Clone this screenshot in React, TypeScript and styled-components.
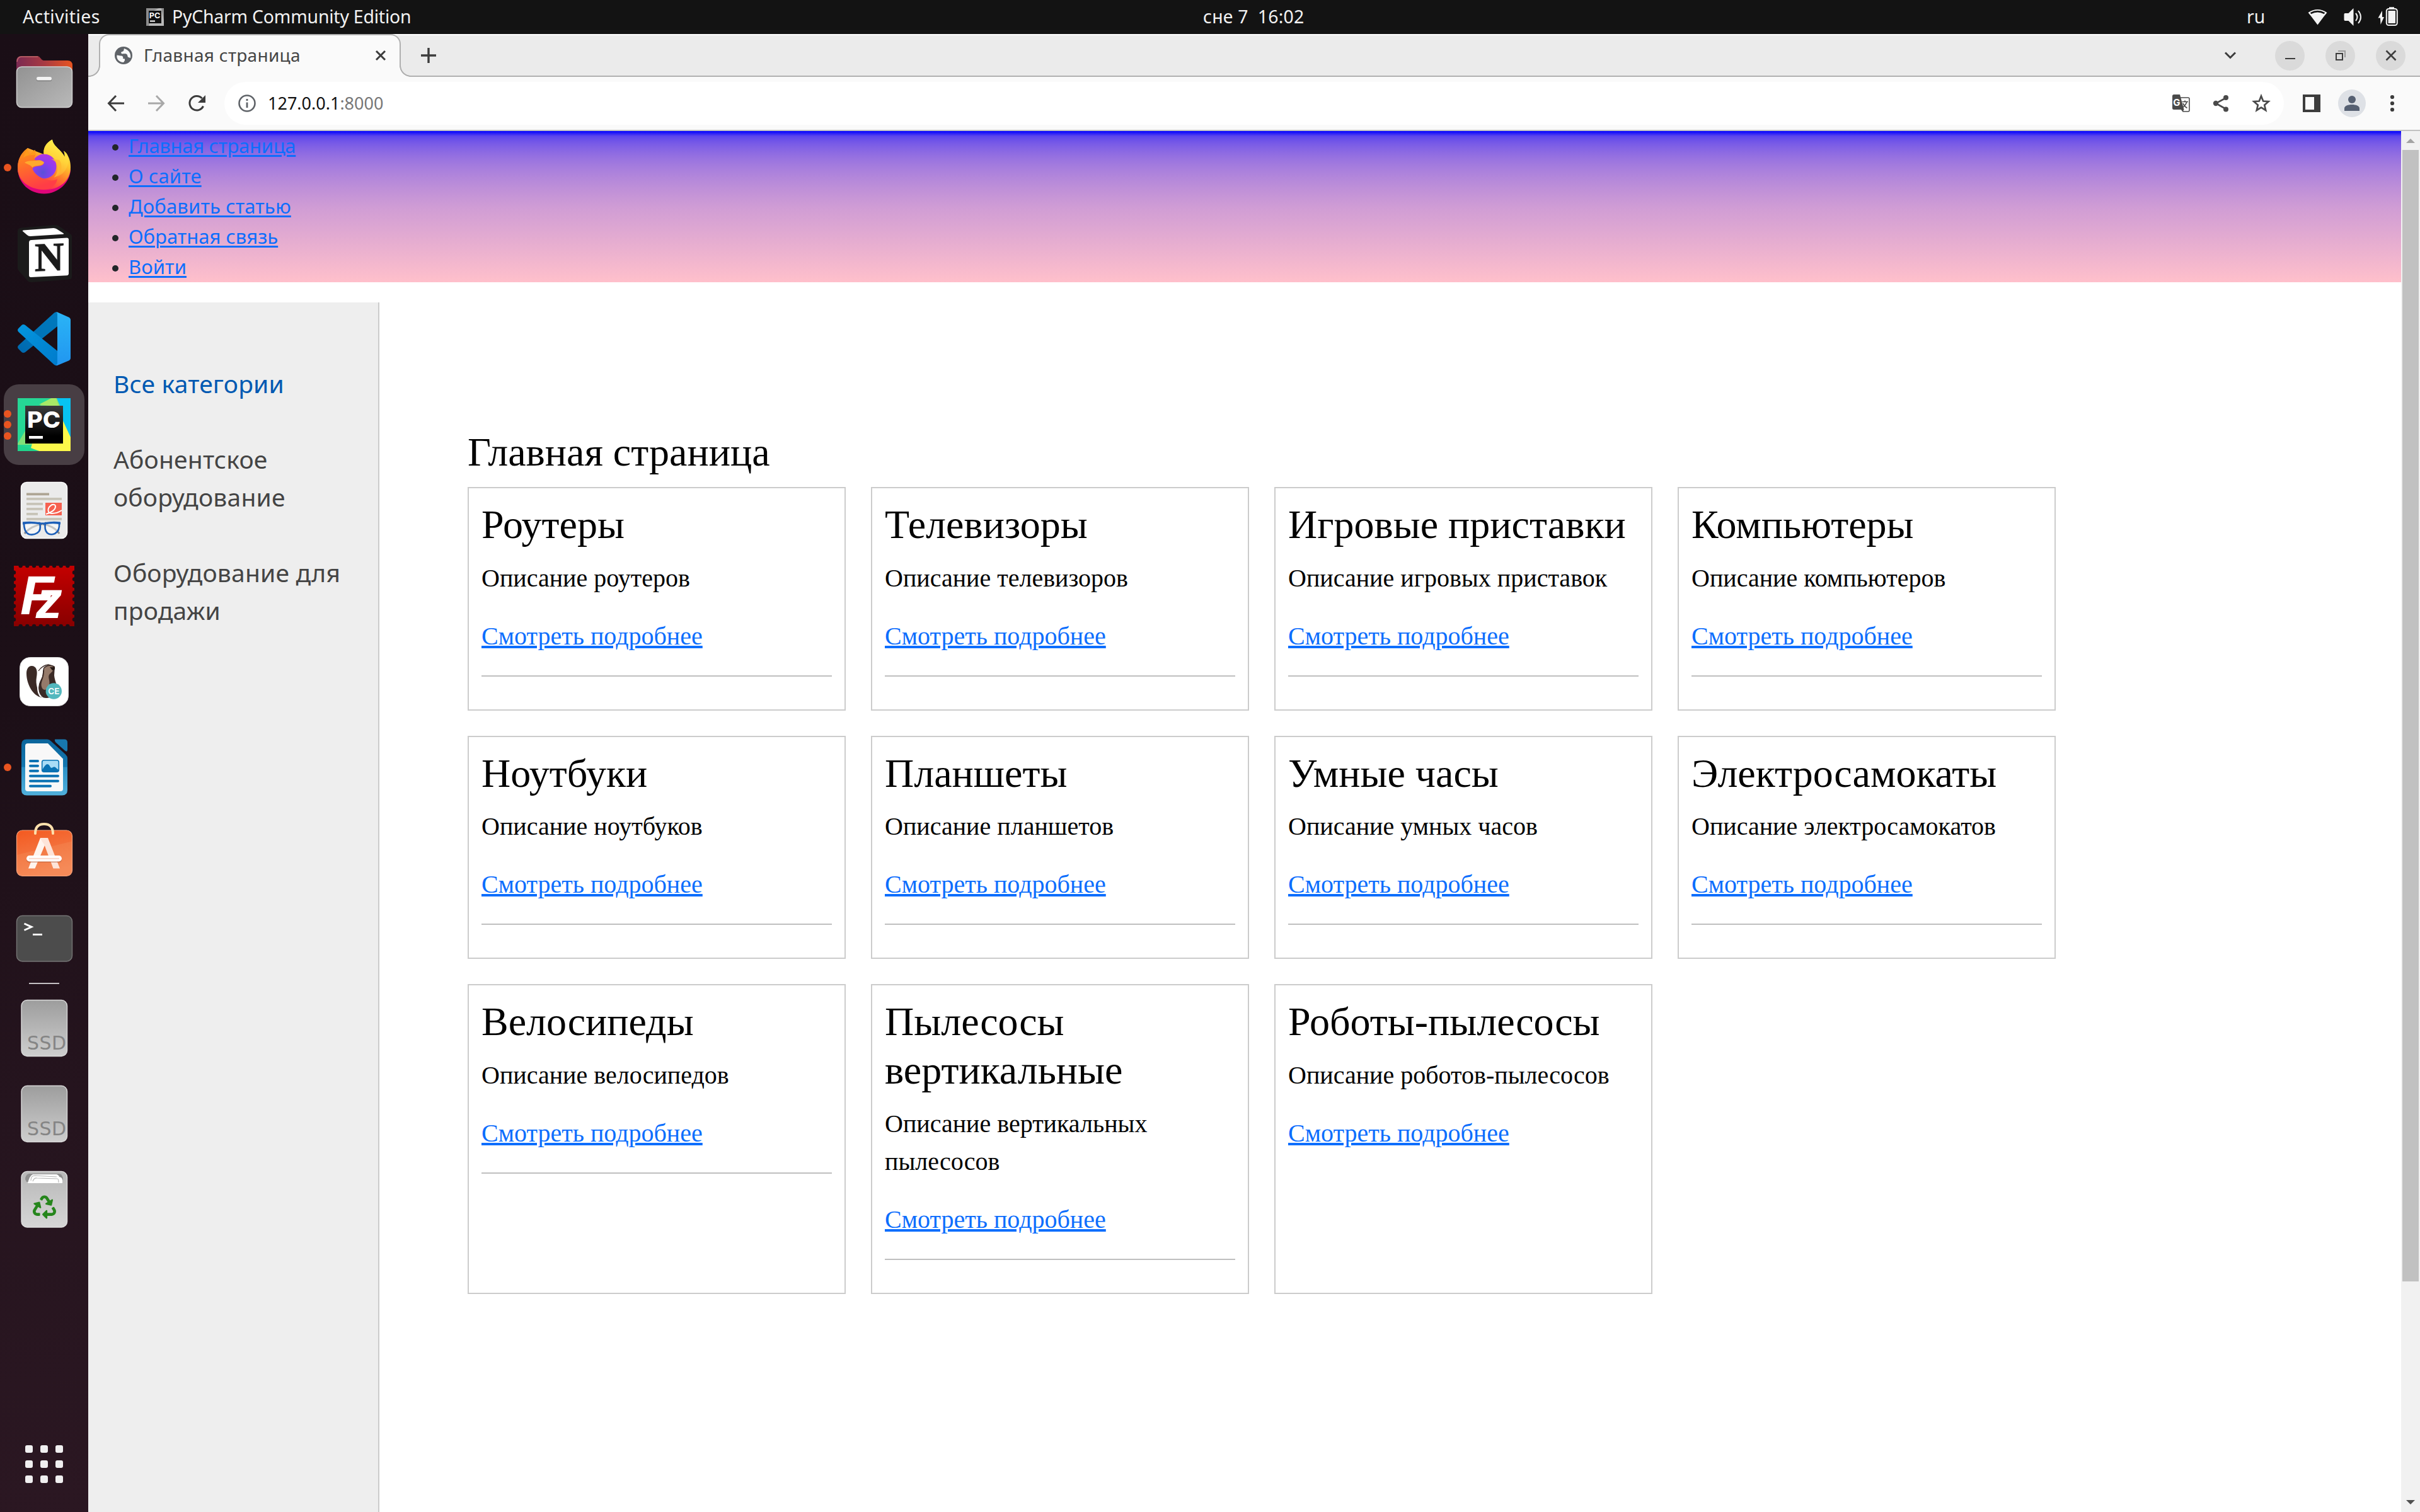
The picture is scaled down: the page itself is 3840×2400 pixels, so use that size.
import React from "react";
import styled, { createGlobalStyle, css } from "styled-components";
import { FaRecycle } from "react-icons/fa";

const sans = `"Noto Sans", "Open Sans", sans-serif`;
const serif = `"Liberation Serif", "Times New Roman", serif`;

const GlobalStyle = createGlobalStyle`
  *, *::before, *::after { box-sizing: border-box; }
  html, body { margin: 0; padding: 0; background: #fff; }
  body { overflow: hidden; }
  h1, h2, p, ul { margin: 0; padding: 0; font-weight: 400; }
  svg { display: block; flex: none; overflow: visible; }
`;

/* ---------- desktop shell ---------- */

const Desktop = styled.div`
  display: grid;
  grid-template: 54px 2346px / 140px 3700px;
  width: 3840px;
  height: 2400px;
  font-family: ${sans};
`;

const TopBar = styled.header`
  grid-column: 1 / -1;
  display: grid;
  grid-template-columns: 1909px auto 1fr;
  background: #131313;
  color: #f2f2f2;
  font-size: 28.4px;
  line-height: 53px;
  white-space: pre;
`;

const TopLeft = styled.div`
  display: flex;
  padding-left: 36px;
`;

const TopLabel = styled.span<{ $tracking?: number; $width?: number }>`
  letter-spacing: ${(p) => p.$tracking ?? 0}px;
  ${(p) => p.$width && css`width: ${p.$width}px;`}
`;

const AppMenu = styled.div`
  display: flex;
  gap: 13px;
  svg { margin-top: 13px; }
`;

const TopRight = styled.div`
  display: flex;
  justify-content: flex-end;
  padding-right: 33px;
  svg { margin-top: 11px; }
`;

/* ---------- dock ---------- */

const DockBar = styled.nav`
  display: flex;
  flex-direction: column;
  padding: 8px 0 0 6px;
  background: linear-gradient(172deg, #1a0e16 0%, #1c0f17 45%, #25141e 72%, #2b1722 100%);
`;

const DockSlot = styled.div<{ $active?: boolean }>`
  position: relative;
  display: flex;
  align-items: center;
  justify-content: center;
  width: 128px;
  height: 128px;
  margin: 4px 0;
  border-radius: 24px;
  background: ${(p) => (p.$active ? "#483e44" : "transparent")};
`;

const RunningDots = styled.div`
  position: absolute;
  left: 0;
  top: 0;
  bottom: 0;
  display: flex;
  flex-direction: column;
  justify-content: center;
  gap: 5.5px;
`;

const Dot = styled.i`
  width: 12px;
  height: 12px;
  border-radius: 50%;
  background: #e95420;
`;

const DockRule = styled.div`
  width: 48px;
  height: 2px;
  margin: 2px 0 2px 40px;
  background: #c4c0c3;
`;

const AppsGrid = styled.div`
  display: grid;
  grid-template: repeat(3, 12px) / repeat(3, 12px);
  gap: 12px;
  margin: auto 0 46px 34px;
  i { border-radius: 3px; background: #f0eff0; }
`;

/* ---------- browser chrome ---------- */

const Browser = styled.main`
  display: grid;
  grid-template-rows: 68px 86px 2192px;
  background: #fff;
`;

const TabStrip = styled.div`
  display: flex;
  border-top: 2px solid #fff;
  border-bottom: 2px solid #b0b0b0;
  background: #ebebeb;
  padding-left: 17px;
`;

const Tab = styled.div`
  position: relative;
  display: flex;
  align-items: center;
  width: 479px;
  height: 68px;
  margin-top: -2px;
  padding: 0 20px 2px 23px;
  border: 2px solid #b0b0b0;
  border-bottom: 0;
  border-radius: 16px 16px 0 0;
  background: #fafafa;
  color: #454545;
  font-size: 28px;
  letter-spacing: 0.3px;

  &::before,
  &::after {
    content: "";
    position: absolute;
    bottom: 0;
    width: 18px;
    height: 18px;
  }
  &::before {
    left: -18px;
    background: radial-gradient(circle at 0 0, #ebebeb 15.5px, #b0b0b0 16.2px, #b0b0b0 17.6px, #fafafa 18.2px);
  }
  &::after {
    right: -18px;
    background: radial-gradient(circle at 100% 0, #ebebeb 15.5px, #b0b0b0 16.2px, #b0b0b0 17.6px, #fafafa 18.2px);
  }
`;

const TabTitle = styled.span`
  flex: 1;
  margin-left: 18px;
  padding-bottom: 2px;
`;

const NewTab = styled.div`
  display: flex;
  align-items: center;
  margin-left: 32px;
`;

const WindowControls = styled.div`
  display: flex;
  align-items: center;
  margin-left: auto;
  padding-right: 23px;
`;

const Spacer = styled.span`
  width: 28px;
`;

const RoundButton = styled.span`
  display: flex;
  align-items: center;
  justify-content: center;
  width: 47px;
  height: 47px;
  margin-left: 33px;
  border-radius: 50%;
  background: #dadada;
`;

const Toolbar = styled.div`
  display: flex;
  align-items: center;
  background: #fafafa;
  border-bottom: 2px solid #c2c2c2;
  padding-left: 28px;
`;

const NavButtons = styled.div`
  display: flex;
  gap: 32px;
  width: 188px;
`;

const Omnibox = styled.div`
  display: flex;
  align-items: center;
  width: 3268px;
  height: 68px;
  padding: 0 21px 0 22px;
  border-radius: 34px;
  background: #fff;
`;

const Address = styled.span`
  flex: 1;
  margin-left: 19px;
  padding-bottom: 2px;
  font-size: 27px;
  color: #111;
  span { color: #777; }
`;

const OmniIcons = styled.div`
  display: flex;
  align-items: center;
  gap: 36px;
`;

const ToolbarRight = styled.div`
  display: flex;
  align-items: center;
  padding-left: 30px;
`;

const Avatar = styled.span`
  display: flex;
  align-items: center;
  justify-content: center;
  width: 44px;
  height: 44px;
  margin: 0 38px 0 28px;
  border-radius: 50%;
  background: #dee1e6;
`;

/* ---------- page ---------- */

const Viewport = styled.div`
  display: grid;
  grid-template-columns: 3670px 30px;
`;

const Page = styled.div`
  display: grid;
  grid-template-rows: 240px 1920px;
  row-gap: 32px;
`;

const SiteHeader = styled.ul`
  list-style: none;
  padding-left: 38px;
  background: linear-gradient(blue, 10%, pink);
`;

const MenuItem = styled.li`
  display: flex;
  align-items: center;
  height: 48px;
  &::before {
    content: "";
    width: 10px;
    height: 10px;
    margin: 4px 16px 0 0;
    border-radius: 50%;
    background: #212529;
  }
`;

const MenuLink = styled.a<{ $tracking: number }>`
  font-size: 31px;
  line-height: 46px;
  padding-bottom: 2px;
  letter-spacing: ${(p) => p.$tracking}px;
  color: #0d6efd;
  text-decoration: underline;
  text-decoration-thickness: 3px;
  text-underline-offset: 3px;
`;

const Columns = styled.div`
  display: grid;
  grid-template-columns: 462px 1fr;
`;

const Sidebar = styled.aside`
  display: flex;
  flex-direction: column;
  gap: 60px;
  padding: 99px 40px 0;
  background: #eee;
  border-right: 2px solid #ccc;
`;

const Category = styled.a<{ $selected?: boolean }>`
  font-size: 39px;
  line-height: 60px;
  letter-spacing: 0.2px;
  color: ${(p) => (p.$selected ? "#0059b2" : "#444")};
`;

const Content = styled.section`
  padding: 200px 0 0 140px;
  font-family: ${serif};
  color: #000;
`;

const Heading = styled.h1`
  font-size: 64px;
  line-height: 76.8px;
  margin-bottom: 16px;
`;

const CardGrid = styled.div`
  display: grid;
  grid-template-columns: repeat(4, 600px);
  gap: 40px;
`;

const Card = styled.article`
  padding: 20px;
  border: 2px solid #ccc;
`;

const CardTitle = styled.h2`
  font-size: 64px;
  line-height: 76.8px;
  margin-bottom: 16px;
`;

const CardText = styled.p`
  font-size: 40px;
  line-height: 60px;
  margin-bottom: 32px;
`;

const CardLink = styled.a`
  display: block;
  width: max-content;
  font-size: 40px;
  line-height: 60px;
  color: #0d6efd;
  text-decoration: underline;
  text-decoration-thickness: 4px;
  text-underline-offset: 2px;
`;

const CardRule = styled.hr`
  height: 2px;
  margin: 32px 0;
  border: 0;
  background: #bfbfbf;
`;

const Scrollbar = styled.div`
  display: flex;
  flex-direction: column;
  align-items: center;
  background: #f1f1f1;
  padding: 12px 0;
`;

const Thumb = styled.div`
  width: 26px;
  height: 1796px;
  margin: 11px 0 auto;
  background: #c1c1c1;
`;

/* ---------- dock icons, each on a 96 unit square ---------- */

const Icon = ({ children }: { children: React.ReactNode }) => (
  <svg width="96" height="96" viewBox="0 0 96 96">{children}</svg>
);

const FilesIcon = () => (
  <Icon>
    <defs>
      <linearGradient id="fb" x1="0" x2="1"><stop offset="0" stopColor="#7b2a52" /><stop offset=".5" stopColor="#a83a42" /><stop offset="1" stopColor="#e95420" /></linearGradient>
      <linearGradient id="ff" x1="0" x2="1" y1="0" y2="1"><stop offset="0" stopColor="#929292" /><stop offset="1" stopColor="#b9b9b9" /></linearGradient>
    </defs>
    <path d="M4 40V15q0-8 8-8h26q2 0 4 3t5 4h38q8 0 8 8v18z" fill="url(#fb)" />
    <path d="M5 16q1-8 7-8h26" fill="none" stroke="#c06a6a" strokeWidth="1.5" />
    <rect x="4.5" y="24" width="88" height="64.5" rx="8" fill="url(#ff)" stroke="#cfcfcf" strokeWidth="1.5" />
    <rect x="36" y="42" width="24" height="5" rx="2.5" fill="#7a7a7a" />
    <rect x="36" y="40" width="24" height="5.6" rx="2.8" fill="#f3f3f3" />
  </Icon>
);

const FirefoxIcon = () => (
  <Icon>
    <defs>
      <linearGradient id="fx" x1=".8" y1=".1" x2=".25" y2=".95"><stop offset="0" stopColor="#fff44f" /><stop offset=".3" stopColor="#ffc02c" /><stop offset=".55" stopColor="#ff7a2a" /><stop offset=".8" stopColor="#ff3a4a" /><stop offset="1" stopColor="#e6007e" /></linearGradient>
      <radialGradient id="fp" cx=".45" cy=".75" r=".8"><stop offset="0" stopColor="#5a50d8" /><stop offset=".5" stopColor="#8a3df0" /><stop offset="1" stopColor="#b833e1" /></radialGradient>
      <linearGradient id="fl" x1=".7" y1="0" x2=".4" y2="1"><stop offset="0" stopColor="#fff44f" /><stop offset=".5" stopColor="#ffd53a" /><stop offset="1" stopColor="#ff9a2e" /></linearGradient>
      <linearGradient id="fs" x1="0" y1="0" x2=".3" y2="1"><stop offset="0" stopColor="#ff9d14" /><stop offset=".5" stopColor="#ff6a2c" /><stop offset="1" stopColor="#ff3d46" /></linearGradient>
    </defs>
    <path d="M6 50C7 73 25 89.5 48 89.5S90 71 90 50L80 60 20 62z" fill="#e0057a" />
    <path d="M22 17C11 25 6 36 6 48c0 21 18 35.500 42 35.500S90 69 90 48c0-11-3-20-11-26.400 1.600 4 2 7 1.600 9.400C76 20 62 14 61 3.400 50 9 46.500 18 47.500 27z" fill="url(#fx)" />
    <circle cx="48" cy="46" r="19.500" fill="url(#fp)" />
    <path d="M61 3.400C50 9 46.500 18 47.500 26.500 56 26 61 30 66 36c5 8 4 20-2 27 14-2 24-14 22-32-1-4-3-7-7-9.400 1.600 4 2 7 1.600 9.400C76 20 62 14 61 3.400z" fill="url(#fl)" />
    <path d="M57 34c10 2 15 12 12 20-1 5-3 8-6 10 12-4 16-19 9-28z" fill="#ffb62e" opacity=".8" />
    <path d="M22 17C11 25 6 36 6 48c0 20 17 34 40 35 12 0 21-6 23-17-4 3-11 3-18 1-11-3-19-10-21.500-17 1-3 5-4 10-4.500 5 0 8-2.500 8-5.500-4-4-8-4-12.500-3.500C32 35 31 33 34.500 27.500L33.700 20c-4 2-6.700 5-8 8-2.700-2-3.700-6-3.700-11z" fill="url(#fs)" />
    <path d="M17 40c6-4 14-2 22-3.500 4-.5 7 1 9 3.500-2 4-6 4.500-10 5-5 .5-7 1-8.500 3C26 43 21 43 17 40z" fill="#ffa92e" />
    <path d="M22 17c-2 4-5 9-7 15 7-5 15-4 19-4l-.3-8c-4 2-6.700 5-8 8-2.700-2-3.700-6-3.700-11z" fill="#ff9a1c" />
  </Icon>
);

const NotionIcon = () => (
  <Icon>
    <path d="M12 7.500 66 3q3 0 5 1.500l19 13q2 2 2 4V85q0 4-4 4.500L28 94q-4 0-6-2L8 76q-2-2-2-5V13q0-5 6-5.500z" fill="#1b1b1b" />
    <path d="M15 11.500 63 8q3 0 5 1.500l11 7q1 1-1 1.200L26 21q-3 0-5-2l-7-6q-1-1 1-1.500z" fill="#fff" />
    <path d="M28 27l56-3.500q3 0 3 3V80q0 3-3 3.200L27 86q-3 0-3-3V31q0-4 4-4z" fill="#fff" />
    <text x="56" y="76" fontFamily="Liberation Serif, serif" fontWeight="700" fontSize="64" textAnchor="middle" fill="#1b1b1b" stroke="#1b1b1b" strokeWidth="1" transform="skewY(-2) translate(0 1.500)">N</text>
  </Icon>
);

const CodeIcon = () => (
  <Icon>
    <defs>
      <linearGradient id="vr" x2="0" y2="1"><stop offset="0" stopColor="#2ab4f6" /><stop offset="1" stopColor="#2196f0" /></linearGradient>
      <linearGradient id="vd" x1="1" y1="0" x2="0" y2="1"><stop offset="0" stopColor="#0079bd" /><stop offset=".6" stopColor="#0073b8" /><stop offset="1" stopColor="#0067ad" /></linearGradient>
      <linearGradient id="vb" x2="1" y2="1"><stop offset="0" stopColor="#0496de" /><stop offset="1" stopColor="#007bcc" /></linearGradient>
    </defs>
    <path d="M69 5.500q-3-1-5.500 1.500L7.500 58q-3 3 0 6l5 5q2.500 2 5.500 0L69 28z" fill="url(#vd)" />
    <path d="M69 90q-3 1-5.500-1.500L7.500 37q-3-3 0-6l5-5q2.500-2 5.500 0L69 67z" fill="url(#vb)" />
    <path d="M69 5.500 87 13.500q3 1.500 3 4.500v60q0 3-3 4.500L69 90q-2 0-2-1 2 0 2-3V9q0-3-2-3z" fill="url(#vr)" />
  </Icon>
);

const PyCharmIcon = () => (
  <Icon>
    <defs><linearGradient id="pk" x2="0" y2="1"><stop offset="0" stopColor="#3c3c3c" /><stop offset=".8" stopColor="#000" /></linearGradient></defs>
    <rect x="6" y="6" width="84" height="84" fill="#26d695" />
    <path d="M58 6h32v64L74 42z" fill="#07c3f2" />
    <path d="M44 14 59 6h9l6 14v60H6V78z" fill="#7fe078" />
    <path d="M40 16 60 6h7l5 14z" fill="#a9e966" />
    <path d="M78 42 90 68v22H40L27 85l3-10z" fill="#fcf84a" />
    <path d="M6 80v10h34z" fill="#21d48c" />
    <rect x="18" y="18" width="60" height="60" fill="url(#pk)" />
    <text x="21" y="52.500" fontFamily="Inter, sans-serif" fontWeight="800" fontSize="36" textLength="53" lengthAdjust="spacingAndGlyphs" fill="#fff">PC</text>
    <rect x="24" y="66" width="22" height="4.400" fill="#fff" />
  </Icon>
);

const ViewerIcon = () => (
  <Icon>
    <rect x="11.500" y="3.500" width="73" height="89" rx="9" fill="#ebebeb" stroke="#fafafa" strokeWidth="1.500" />
    <rect x="20" y="20.500" width="36" height="3.800" fill="#aea594" />
    <g fill="#c8c4b8">
      <rect x="20" y="28" width="56" height="3.800" /><rect x="20" y="36" width="26" height="3.800" />
      <rect x="20" y="44" width="26" height="3.800" /><rect x="20" y="52" width="18" height="3.800" />
      <rect x="20" y="60" width="56" height="3.800" />
    </g>
    <rect x="50" y="36" width="26" height="20" fill="#f66151" />
    <path d="M51 54c8-2 15-7 15-12 0-4-5-4-8-1-5 4-5 12 2 12 6 0 10-1 16-5" fill="none" stroke="#fff" strokeWidth="2" />
    <path d="M17 85c6-8 18-14 28-15M72 85c-5-8-16-14-26-15" fill="none" stroke="#8b8b8b" strokeWidth="3" />
    <path d="M16 68h25q3 12-4 16-6 4-13 2-8-3-8-18zM50 68h22q1 13-7 17-7 3-12-1-5-5-3-16z" fill="#fff" fillOpacity=".5" stroke="#1d5fb8" strokeWidth="2.600" />
    <path d="M14 66.500q14-2 27 1h8q12-3 25-1v4q-12-3-24 0h-9q-13-3-27 0z" fill="#1d5fb8" />
  </Icon>
);

const notches = Array.from({ length: 8 }, (_, i) => 10.67 * (i + 1));

const FileZillaIcon = () => (
  <Icon>
    <defs>
      <linearGradient id="fz" x2="0" y2="1"><stop offset="0" stopColor="#c40000" /><stop offset="1" stopColor="#880000" /></linearGradient>
      <mask id="fm">
        <rect width="96" height="96" fill="#fff" />
        {notches.map((n) => (
          <g key={n} fill="#000">
            <circle cx={n} cy="0" r="3.200" /><circle cx={n} cy="96" r="3.200" />
            <circle cx="0" cy={n} r="3.200" /><circle cx="96" cy={n} r="3.200" />
          </g>
        ))}
      </mask>
    </defs>
    <rect width="96" height="96" fill="url(#fz)" mask="url(#fm)" />
    <text x="10" y="77" fontFamily="Liberation Sans, sans-serif" fontStyle="italic" fontWeight="700" fontSize="88" fill="#fff">
      F<tspan dx="-29" dy="6" fontSize="84">z</tspan>
    </text>
  </Icon>
);

const BeaverIcon = () => (
  <Icon>
    <rect x="9.500" y="9.500" width="77" height="77" rx="16" fill="#fff" stroke="#d8d8d8" strokeWidth="1" />
    <path d="M28 23c8 0 10 8 8 18-2 11 2 22 8 32-14-2-24-22-24-38 0-7 3-12 8-12z" fill="#3b2a26" />
    <path d="M47 26c6-6 14-5 18-2l-1 14c1 10 5 14 4 22-2 12-14 16-22 13-7-6-8-14-6-22 2-7 6-10 5-15z" fill="#3b2a26" />
    <path d="M48 27c5-5 11-5 15-2 0 7-4 8-7 12-3 5 4 12-2 21-4 5-9 3-10-2-2-9 5-13 4-29z" fill="#957a6a" />
    <path d="M39 31q6-9 16-10l6 2" fill="none" stroke="#3b2a26" strokeWidth="1.300" />
    <path d="M45 29c1 14-7 16-7 29 0 6 2 11 5 14" fill="none" stroke="#fff" strokeWidth="2" />
    <path d="M57 25h8q1 5-4 5z" fill="#241815" />
    <circle cx="63.300" cy="63" r="12.700" fill="#53b8be" />
    <text x="63.300" y="68" textAnchor="middle" fontFamily="Inter, sans-serif" fontWeight="600" fontSize="13.500" fill="#fff">CE</text>
  </Icon>
);

const WriterIcon = () => (
  <Icon>
    <defs><linearGradient id="wr" x2="0" y2="1"><stop offset="0" stopColor="#0b659b" /><stop offset=".49" stopColor="#1377b0" /><stop offset=".5" stopColor="#2a8fc4" /><stop offset="1" stopColor="#50b0dc" /></linearGradient></defs>
    <path d="M20 3.500h33q3 0 6 3l23 21q3 3 3 6V84q0 8.500-8.500 8.500h-56q-8.500 0-8.500-8.500V12q0-8.500 8-8.500z" fill="url(#wr)" />
    <path d="M65.500 3.500H80q5 0 5 5v11q0 5-4 2L66 8q-2-4-.5-4.500z" fill="#1878ae" />
    <path d="M22 10h32l24 24.500V82q0 4-4 4H22q-4 0-4-4V14q0-4 4-4z" fill="#f8f8f8" />
    <path d="M26 38h12M26 45.700h12M26 53.700h12M26 61.700h44M26 69.800h44M26 77.800h32" stroke="#0a72b3" strokeWidth="4" strokeLinecap="round" />
    <rect x="44.700" y="36.700" width="26.600" height="18.600" rx="3" fill="#a9dcf6" stroke="#0a72b3" strokeWidth="1.600" />
    <path d="M45 52q5-9 8-9t5 5l2 1q4-3 6-1t5 4v3H45z" fill="#0a72b3" />
  </Icon>
);

const SoftwareIcon = () => (
  <Icon>
    <defs><linearGradient id="sw" x2=".3" y2="1"><stop offset="0" stopColor="#f4591f" /><stop offset=".49" stopColor="#f36f3a" /><stop offset=".5" stopColor="#f37a45" /><stop offset="1" stopColor="#f58a58" /></linearGradient></defs>
    <rect x="4.500" y="12" width="88" height="72.500" rx="9" fill="url(#sw)" stroke="#f8a47c" strokeWidth="1.200" />
    <path d="M34 17q0-15 14-15t14 15" fill="none" stroke="#fde0ac" strokeWidth="4" strokeLinecap="round" />
    <path d="M42 24h12l-20.500 48.500H23z" fill="#fff4ee" />
    <path d="M42 24h12l19 48.500H62.500L48 34l-3-4z" fill="#fde4d9" />
    <rect x="20" y="54.500" width="56" height="8.500" rx="4.200" fill="#b45a36" opacity=".6" />
    <rect x="20" y="52" width="56" height="9.500" rx="4.700" fill="#fff" />
    <rect x="24" y="55.800" width="48" height="2" fill="#fbd9cc" />
  </Icon>
);

const TerminalIcon = () => (
  <Icon>
    <rect x="4.500" y="11.500" width="88" height="72.500" rx="9" fill="#4c4c4c" stroke="#757575" strokeWidth="1.400" />
    <path d="M16.500 24 28 29.300 16.500 34.500" fill="none" stroke="#fff" strokeWidth="3" />
    <rect x="30" y="40" width="15" height="2.800" fill="#fff" />
  </Icon>
);

const DriveIcon = () => (
  <Icon>
    <defs><linearGradient id="sd" x2="0" y2="1"><stop offset="0" stopColor="#9d9d9d" /><stop offset="1" stopColor="#cecece" /></linearGradient></defs>
    <rect x="12" y="3.500" width="72.500" height="89" rx="9" fill="url(#sd)" stroke="#d9d9d9" strokeWidth="1.400" />
    <text x="21" y="81.500" fontFamily="DejaVu Sans, sans-serif" fontSize="30" textLength="62" fill="#858585">SSD</text>
  </Icon>
);

const TrashIcon = () => (
  <Icon>
    <defs><linearGradient id="tr" x2="0" y2="1"><stop offset="0" stopColor="#b8b8b8" /><stop offset="1" stopColor="#d6d6d6" /></linearGradient></defs>
    <rect x="12" y="3.500" width="72.500" height="88.500" rx="9" fill="url(#tr)" stroke="#dedede" strokeWidth="1.400" />
    <path d="M18 16q0-7 6-9h48q6 2 6 9l-2 4H20z" fill="#8f8f8f" />
    <path d="M22 22q3-12 8-14h38q4 2 4 4 5 1 5 5v5z" fill="#fff" />
    <path d="M27 18q0-8 6-8l35 2M30 19q2-6 7-5l32 1q2 0 2 6" fill="none" stroke="#b5b5b5" strokeWidth="1.200" />
    <FaRecycle x="30" y="41.500" size={37} color="#26861c" />
  </Icon>
);

/* ---------- data ---------- */

const dock: { icon: React.FC; running?: number; active?: boolean }[] = [
  { icon: FilesIcon },
  { icon: FirefoxIcon, running: 1 },
  { icon: NotionIcon },
  { icon: CodeIcon },
  { icon: PyCharmIcon, running: 3, active: true },
  { icon: ViewerIcon },
  { icon: FileZillaIcon },
  { icon: BeaverIcon },
  { icon: WriterIcon, running: 1 },
  { icon: SoftwareIcon },
  { icon: TerminalIcon },
];

const places: React.FC[] = [DriveIcon, DriveIcon, TrashIcon];

const menu = [
  { label: "Главная страница", tracking: -0.31 },
  { label: "О сайте", tracking: 0.15 },
  { label: "Добавить статью", tracking: 0.15 },
  { label: "Обратная связь", tracking: 0 },
  { label: "Войти", tracking: 0.1 },
];

const categories = ["Все категории", "Абонентское оборудование", "Оборудование для продажи"];

const cards = [
  { title: "Роутеры", text: "Описание роутеров" },
  { title: "Телевизоры", text: "Описание телевизоров" },
  { title: "Игровые приставки", text: "Описание игровых приставок" },
  { title: "Компьютеры", text: "Описание компьютеров" },
  { title: "Ноутбуки", text: "Описание ноутбуков" },
  { title: "Планшеты", text: "Описание планшетов" },
  { title: "Умные часы", text: "Описание умных часов" },
  { title: "Электросамокаты", text: "Описание электросамокатов" },
  { title: "Велосипеды", text: "Описание велосипедов" },
  { title: "Пылесосы вертикальные", text: "Описание вертикальных пылесосов" },
  { title: "Роботы-пылесосы", text: "Описание роботов-пылесосов" },
];

/* ---------- sections ---------- */

const SystemBar = () => (
  <TopBar>
    <TopLeft>
      <TopLabel $tracking={0.45} $width={196}>Activities</TopLabel>
      <AppMenu>
        <svg width="28" height="28" viewBox="0 0 28 28">
          <path d="M0 0h28v28H0z" fill="#8e8e8e" />
          <path d="M12 4 20 0h4l4 20v8H4z" fill="#b9b9b9" />
          <path d="M4 4h20v20H4z" fill="#111" />
          <text x="4.800" y="15.500" fontFamily="Inter, sans-serif" fontWeight="700" fontSize="12" textLength="17.500" lengthAdjust="spacingAndGlyphs" fill="#fff">PC</text>
          <path d="M6 19.500h8v2H6z" fill="#fff" />
        </svg>
        <TopLabel $tracking={-0.2}>PyCharm Community Edition</TopLabel>
      </AppMenu>
    </TopLeft>
    <TopLabel $tracking={0.2}>{"сне 7  16:02"}</TopLabel>
    <TopRight>
      <TopLabel $width={92}>ru</TopLabel>
      <svg width="150" height="32" viewBox="0 0 150 32" fill="#f2f2f2">
        <path d="M5.500 9Q20.500-1 35.500 9L31 14.500 20.500 28.500 10 14.500z" />
        <path d="M9.500 10.200Q20.500 4 31.500 10.200" fill="none" stroke="#131313" strokeWidth="2.600" />
        <path d="M64 10h5.500L77.500 2v28L69.500 22H64q-1.500 0-1.500-2v-8q0-2 1.500-2z" />
        <path d="M81 10q5 6 0 12M85 6q8 10 0 20" fill="none" stroke="#f2f2f2" strokeWidth="2" />
        <path d="M123 6 116.500 17.500h3.500L120.500 28 126 16h-3z" />
        <rect x="129.800" y="3" width="17" height="26" rx="3.500" fill="none" stroke="#f2f2f2" strokeWidth="2" />
        <path d="M134 .2h8V3h-8zM132.500 6h11.500v20h-11.500z" />
      </svg>
    </TopRight>
  </TopBar>
);

const Dock = () => (
  <DockBar>
    {dock.map(({ icon: Glyph, running = 0, active }, i) => (
      <DockSlot key={i} $active={active}>
        <Glyph />
        <RunningDots>{Array.from({ length: running }, (_, n) => <Dot key={n} />)}</RunningDots>
      </DockSlot>
    ))}
    <DockRule />
    {places.map((Glyph, i) => (
      <DockSlot key={i}><Glyph /></DockSlot>
    ))}
    <AppsGrid>{Array.from({ length: 9 }, (_, i) => <i key={i} />)}</AppsGrid>
  </DockBar>
);

const line = { fill: "none", stroke: "#3c3c3c", strokeWidth: 3 };

const Tabs = () => (
  <TabStrip>
    <Tab>
      <svg width="28" height="28" viewBox="0 0 28 28">
        <circle cx="14" cy="14" r="14" fill="#5f6368" />
        <path d="M3.500 13.500 9 14.500c4 0 5 2 4 4.500l3 .5v2.500l-2 3C7 24.500 2.500 20 3.500 13.500zM15 3c-1 3 0 4-3 5-3 .5-2 3 0 3.500 4 0 7-1 8 2 1 2 0 3 2 3.500l3 1c1-6-1-12-10-15z" fill="#fafafa" />
      </svg>
      <TabTitle>Главная страница</TabTitle>
      <svg width="20" height="20" viewBox="0 0 20 20"><path d="M3 3l14 14M17 3 3 17" {...line} /></svg>
    </Tab>
    <NewTab>
      <svg width="24" height="24" viewBox="0 0 24 24"><path d="M12 0v24M0 12h24" {...line} strokeWidth={3.4} /></svg>
    </NewTab>
    <WindowControls>
      <svg width="20" height="14" viewBox="0 0 20 14"><path d="M2 2.500 10 10.500 18 2.500" {...line} /></svg>
      <Spacer />
      <RoundButton><svg width="18" height="18" viewBox="0 0 18 18"><path d="M1 14h16" {...line} strokeWidth={2} /></svg></RoundButton>
      <RoundButton>
        <svg width="18" height="18" viewBox="0 0 18 18">
          <path d="M5 2h11v10" fill="none" stroke="#9a9a9a" strokeWidth="2" />
          <path d="M2 6h10v10H2z" {...line} strokeWidth={2} />
        </svg>
      </RoundButton>
      <RoundButton><svg width="18" height="18" viewBox="0 0 18 18"><path d="M1.500 1.500l15 15M16.500 1.500l-15 15" {...line} strokeWidth={2.6} /></svg></RoundButton>
    </WindowControls>
  </TabStrip>
);

const NavBar = () => (
  <Toolbar>
    <NavButtons>
      <svg width="32" height="32" viewBox="0 0 32 32"><path d="M29 16H5M16 4 4.500 16 16 28" {...line} /></svg>
      <svg width="32" height="32" viewBox="0 0 32 32"><path d="M3 16h24M16 4l11.500 12L16 28" {...line} stroke="#a8a8a8" /></svg>
      <svg width="32" height="32" viewBox="0 0 32 32">
        <path d="M26.500 20.500A11.300 11.300 0 1 1 24.500 8" {...line} />
        <path d="M30 3v12H18z" fill="#3c3c3c" />
      </svg>
    </NavButtons>
    <Omnibox>
      <svg width="28" height="28" viewBox="0 0 28 28">
        <circle cx="14" cy="14" r="12.500" fill="none" stroke="#5f6368" strokeWidth="2.600" />
        <path d="M12.600 12.500h2.800V21h-2.800zM12.600 7h2.800v3h-2.800z" fill="#5f6368" />
      </svg>
      <Address>127.0.0.1<span>:8000</span></Address>
      <OmniIcons>
        <svg width="28" height="28" viewBox="0 0 28 28">
          <path d="M13 5h12q2 0 2 2v18q0 2-2 2h-8l-3.500-5" fill="none" stroke="#4a4a4a" strokeWidth="1.600" />
          <path d="M15.500 11.500h9.500M20 9.500v2M23 11.500q-2 6-6.500 9M17 14q2 5 6.500 7.500" fill="none" stroke="#4a4a4a" strokeWidth="1.600" />
          <path d="M2.500 0H12l6.500 24-2 3-1.500-3H2.500Q0 24 0 21.500v-19Q0 0 2.500 0z" fill="#4a4a4a" />
          <text x="1.200" y="17.500" fontFamily="Inter, sans-serif" fontWeight="700" fontSize="15" fill="#fff">G</text>
        </svg>
        <svg width="26" height="28" viewBox="0 0 26 28">
          <path d="M21 5.500 5 14l16 9" fill="none" stroke="#4a4a4a" strokeWidth="2.600" />
          <g fill="#4a4a4a"><circle cx="21" cy="5" r="4" /><circle cx="5" cy="14" r="4.200" /><circle cx="21" cy="23.500" r="4" /></g>
        </svg>
        <svg width="30" height="30" viewBox="0 0 30 30">
          <path d="M15 3.500l3.200 8 8.400.7-6.400 5.500 2 8.300L15 21.500 7.800 26l2-8.300-6.400-5.500 8.400-.7z" fill="none" stroke="#4a4a4a" strokeWidth="2.700" />
        </svg>
      </OmniIcons>
    </Omnibox>
    <ToolbarRight>
      <svg width="28" height="28" viewBox="0 0 28 28"><path fillRule="evenodd" d="M0 0h28v28H0zM4 4v20h14V4z" fill="#3c3c3c" /></svg>
      <Avatar>
        <svg width="24" height="24" viewBox="0 0 24 24" fill="#566072">
          <circle cx="12" cy="6" r="6" /><path d="M0 24v-4c0-4 6-6 12-6s12 2 12 6v4z" />
        </svg>
      </Avatar>
      <svg width="8" height="28" viewBox="0 0 8 28" fill="#3c3c3c">
        <circle cx="4" cy="4" r="3.100" /><circle cx="4" cy="14" r="3.100" /><circle cx="4" cy="24" r="3.100" />
      </svg>
    </ToolbarRight>
  </Toolbar>
);

const Site = () => (
  <Page>
    <SiteHeader>
      {menu.map((m) => (
        <MenuItem key={m.label}><MenuLink $tracking={m.tracking}>{m.label}</MenuLink></MenuItem>
      ))}
    </SiteHeader>
    <Columns>
      <Sidebar>
        {categories.map((c, i) => <Category key={c} $selected={i === 0}>{c}</Category>)}
      </Sidebar>
      <Content>
        <Heading>Главная страница</Heading>
        <CardGrid>
          {cards.map((c, i) => (
            <Card key={c.title}>
              <CardTitle>{c.title}</CardTitle>
              <CardText>{c.text}</CardText>
              <CardLink>Смотреть подробнее</CardLink>
              {i < cards.length - 1 && <CardRule />}
            </Card>
          ))}
        </CardGrid>
      </Content>
    </Columns>
  </Page>
);

export default function App() {
  return (
    <>
      <GlobalStyle />
      <Desktop>
        <SystemBar />
        <Dock />
        <Browser>
          <Tabs />
          <NavBar />
          <Viewport>
            <Site />
            <Scrollbar>
              <svg width="14" height="7" viewBox="0 0 14 7"><path d="M7 0l7 7H0z" fill="#a3a3a3" /></svg>
              <Thumb />
              <svg width="14" height="7" viewBox="0 0 14 7"><path d="M0 0h14L7 7z" fill="#505050" /></svg>
            </Scrollbar>
          </Viewport>
        </Browser>
      </Desktop>
    </>
  );
}
